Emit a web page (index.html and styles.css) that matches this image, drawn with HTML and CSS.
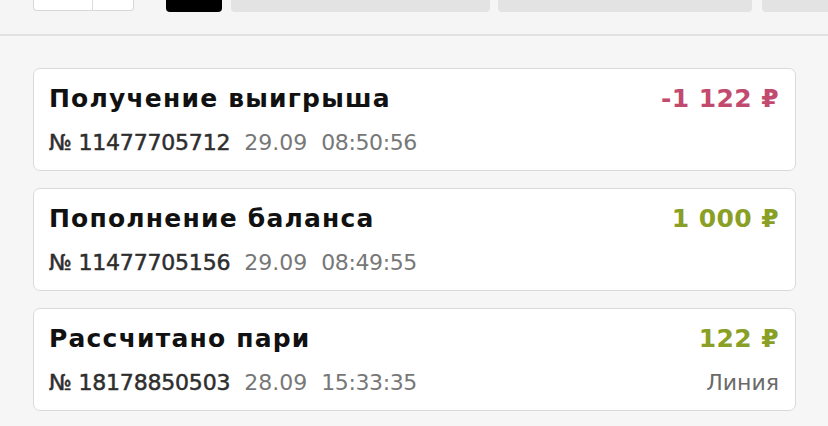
FILE: index.html
```html
<!DOCTYPE html>
<html lang="ru">
<head>
<meta charset="utf-8">
<link rel="stylesheet" href="styles.css">
</head>
<body>
<header class="top">
  <div class="seg"><span class="seg-a"></span><span class="seg-b"></span></div>
  <span class="pill pill-dark"></span>
  <span class="pill pill-1"></span>
  <span class="pill pill-2"></span>
  <span class="pill pill-3"></span>
</header>
<main class="list">
  <div class="card">
    <div class="row">
      <div class="title">Получение выигрыша</div>
      <div class="amount neg">-1 122 ₽</div>
    </div>
    <div class="row meta">
      <div class="info"><span class="num">№ 11477705712</span><span class="date">29.09</span><span class="time">08:50:56</span></div>
    </div>
  </div>
  <div class="card">
    <div class="row">
      <div class="title">Пополнение баланса</div>
      <div class="amount pos">1 000 ₽</div>
    </div>
    <div class="row meta">
      <div class="info"><span class="num">№ 11477705156</span><span class="date">29.09</span><span class="time">08:49:55</span></div>
    </div>
  </div>
  <div class="card">
    <div class="row">
      <div class="title">Рассчитано пари</div>
      <div class="amount pos">122 ₽</div>
    </div>
    <div class="row meta">
      <div class="info"><span class="num">№ 18178850503</span><span class="date">28.09</span><span class="time">15:33:35</span></div>
      <div class="kind">Линия</div>
    </div>
  </div>
</main>
</body>
</html>
```
FILE: styles.css
```css
html, body {
  margin: 0;
  padding: 0;
}
body {
  background: #f6f6f6;
  font-family: "DejaVu Sans", "Open Sans", sans-serif;
  width: 828px;
  height: 426px;
  overflow: hidden;
}
.top {
  height: 34px;
  border-bottom: 2px solid #e2e2e2;
  background: #f5f5f5;
  display: flex;
  align-items: flex-start;
  padding-left: 33px;
  box-sizing: content-box;
}
.seg {
  display: flex;
  width: 101px;
  height: 11px;
  border: 1px solid #d8d8d8;
  border-top: none;
  border-radius: 0 0 4px 4px;
  background: #fff;
  box-sizing: border-box;
  margin-right: 32px;
}
.seg-a {
  width: 58px;
  border-right: 1px solid #dcdcdc;
}
.pill {
  display: block;
  height: 12px;
  border-radius: 0 0 4px 4px;
  background: #e3e3e3;
}
.pill-dark {
  width: 56px;
  background: #000;
  margin-right: 9px;
}
.pill-1 { width: 259px; margin-right: 8px; }
.pill-2 { width: 254px; margin-right: 10px; }
.pill-3 { flex: 1; border-radius: 0 0 0 4px; }

.list {
  display: flex;
  flex-direction: column;
  gap: 17px;
  padding: 32px 32px 0 33px;
}
.card {
  background: #fff;
  border: 1px solid #dadada;
  border-radius: 7px;
  height: 103px;
  box-sizing: border-box;
  padding: 15px 16px 0 15px;
}
.row {
  display: flex;
  justify-content: space-between;
  align-items: baseline;
}
.title {
  font-size: 25px;
  font-weight: 700;
  color: #111;
  line-height: 30px;
  letter-spacing: 1.2px;
}
.amount {
  font-size: 25px;
  font-weight: 700;
  line-height: 30px;
  letter-spacing: 0.4px;
}
.neg { color: #c34a6f; }
.pos { color: #8a9f25; }
.meta {
  margin-top: 16px;
  font-size: 22px;
  line-height: 26px;
}
.info {
  display: flex;
  gap: 14px;
}
.num {
  color: #2e2e2e;
  -webkit-text-stroke: 0.5px #2e2e2e;
  letter-spacing: -0.2px;
}
.date, .time {
  color: #777;
}
.time { letter-spacing: -0.4px; }
.kind { color: #6a6a6a; }
```
